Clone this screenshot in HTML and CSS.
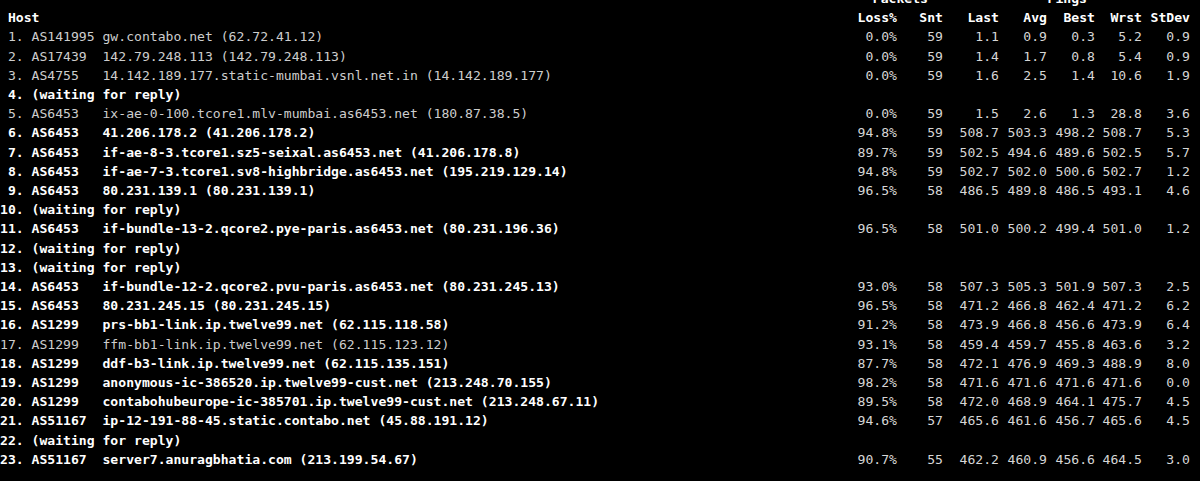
FILE: index.html
```html
<!DOCTYPE html>
<html>
<head>
<meta charset="utf-8">
<title>mtr</title>
<link rel="stylesheet" href="styles.css">
</head>
<body>
<div class="term">
  <div class="row head"><span class="host"></span><span class="grp packets">Packets</span><span class="grp pings">Pings</span></div>
  <div class="row head"><span class="host"> Host</span><span class="n">Loss%</span><span class="n">Snt</span><span class="n">Last</span><span class="n">Avg</span><span class="n">Best</span><span class="n">Wrst</span><span class="n">StDev</span></div>
  <div class="row"><span class="host"> 1. AS141995 gw.contabo.net (62.72.41.12)</span><span class="n">0.0%</span><span class="n">59</span><span class="n">1.1</span><span class="n">0.9</span><span class="n">0.3</span><span class="n">5.2</span><span class="n">0.9</span></div>
  <div class="row"><span class="host"> 2. AS17439  142.79.248.113 (142.79.248.113)</span><span class="n">0.0%</span><span class="n">59</span><span class="n">1.4</span><span class="n">1.7</span><span class="n">0.8</span><span class="n">5.4</span><span class="n">0.9</span></div>
  <div class="row"><span class="host"> 3. AS4755   14.142.189.177.static-mumbai.vsnl.net.in (14.142.189.177)</span><span class="n">0.0%</span><span class="n">59</span><span class="n">1.6</span><span class="n">2.5</span><span class="n">1.4</span><span class="n">10.6</span><span class="n">1.9</span></div>
  <div class="row"><span class="host b"> 4. (waiting for reply)</span></div>
  <div class="row"><span class="host"> 5. AS6453   ix-ae-0-100.tcore1.mlv-mumbai.as6453.net (180.87.38.5)</span><span class="n">0.0%</span><span class="n">59</span><span class="n">1.5</span><span class="n">2.6</span><span class="n">1.3</span><span class="n">28.8</span><span class="n">3.6</span></div>
  <div class="row"><span class="host b"> 6. AS6453   41.206.178.2 (41.206.178.2)</span><span class="n">94.8%</span><span class="n">59</span><span class="n">508.7</span><span class="n">503.3</span><span class="n">498.2</span><span class="n">508.7</span><span class="n">5.3</span></div>
  <div class="row"><span class="host b"> 7. AS6453   if-ae-8-3.tcore1.sz5-seixal.as6453.net (41.206.178.8)</span><span class="n">89.7%</span><span class="n">59</span><span class="n">502.5</span><span class="n">494.6</span><span class="n">489.6</span><span class="n">502.5</span><span class="n">5.7</span></div>
  <div class="row"><span class="host b"> 8. AS6453   if-ae-7-3.tcore1.sv8-highbridge.as6453.net (195.219.129.14)</span><span class="n">94.8%</span><span class="n">59</span><span class="n">502.7</span><span class="n">502.0</span><span class="n">500.6</span><span class="n">502.7</span><span class="n">1.2</span></div>
  <div class="row"><span class="host b"> 9. AS6453   80.231.139.1 (80.231.139.1)</span><span class="n">96.5%</span><span class="n">58</span><span class="n">486.5</span><span class="n">489.8</span><span class="n">486.5</span><span class="n">493.1</span><span class="n">4.6</span></div>
  <div class="row"><span class="host b">10. (waiting for reply)</span></div>
  <div class="row"><span class="host b">11. AS6453   if-bundle-13-2.qcore2.pye-paris.as6453.net (80.231.196.36)</span><span class="n">96.5%</span><span class="n">58</span><span class="n">501.0</span><span class="n">500.2</span><span class="n">499.4</span><span class="n">501.0</span><span class="n">1.2</span></div>
  <div class="row"><span class="host b">12. (waiting for reply)</span></div>
  <div class="row"><span class="host b">13. (waiting for reply)</span></div>
  <div class="row"><span class="host b">14. AS6453   if-bundle-12-2.qcore2.pvu-paris.as6453.net (80.231.245.13)</span><span class="n">93.0%</span><span class="n">58</span><span class="n">507.3</span><span class="n">505.3</span><span class="n">501.9</span><span class="n">507.3</span><span class="n">2.5</span></div>
  <div class="row"><span class="host b">15. AS6453   80.231.245.15 (80.231.245.15)</span><span class="n">96.5%</span><span class="n">58</span><span class="n">471.2</span><span class="n">466.8</span><span class="n">462.4</span><span class="n">471.2</span><span class="n">6.2</span></div>
  <div class="row"><span class="host b">16. AS1299   prs-bb1-link.ip.twelve99.net (62.115.118.58)</span><span class="n">91.2%</span><span class="n">58</span><span class="n">473.9</span><span class="n">466.8</span><span class="n">456.6</span><span class="n">473.9</span><span class="n">6.4</span></div>
  <div class="row"><span class="host">17. AS1299   ffm-bb1-link.ip.twelve99.net (62.115.123.12)</span><span class="n">93.1%</span><span class="n">58</span><span class="n">459.4</span><span class="n">459.7</span><span class="n">455.8</span><span class="n">463.6</span><span class="n">3.2</span></div>
  <div class="row"><span class="host b">18. AS1299   ddf-b3-link.ip.twelve99.net (62.115.135.151)</span><span class="n">87.7%</span><span class="n">58</span><span class="n">472.1</span><span class="n">476.9</span><span class="n">469.3</span><span class="n">488.9</span><span class="n">8.0</span></div>
  <div class="row"><span class="host b">19. AS1299   anonymous-ic-386520.ip.twelve99-cust.net (213.248.70.155)</span><span class="n">98.2%</span><span class="n">58</span><span class="n">471.6</span><span class="n">471.6</span><span class="n">471.6</span><span class="n">471.6</span><span class="n">0.0</span></div>
  <div class="row"><span class="host b">20. AS1299   contabohubeurope-ic-385701.ip.twelve99-cust.net (213.248.67.11)</span><span class="n">89.5%</span><span class="n">58</span><span class="n">472.0</span><span class="n">468.9</span><span class="n">464.1</span><span class="n">475.7</span><span class="n">4.5</span></div>
  <div class="row"><span class="host b">21. AS51167  ip-12-191-88-45.static.contabo.net (45.88.191.12)</span><span class="n">94.6%</span><span class="n">57</span><span class="n">465.6</span><span class="n">461.6</span><span class="n">456.7</span><span class="n">465.6</span><span class="n">4.5</span></div>
  <div class="row"><span class="host b">22. (waiting for reply)</span></div>
  <div class="row"><span class="host b">23. AS51167  server7.anuragbhatia.com (213.199.54.67)</span><span class="n">90.7%</span><span class="n">55</span><span class="n">462.2</span><span class="n">460.9</span><span class="n">456.6</span><span class="n">464.5</span><span class="n">3.0</span></div>
</div>
</body>
</html>
```

FILE: styles.css
```css
html, body {
  margin: 0;
  background: #000;
}

body {
  font-family: "DejaVu Sans Mono", "Liberation Mono", monospace;
  font-size: 13.1px;
  line-height: 19.2px;
  color: #d2d2d2;
  overflow: hidden;
}

.term {
  margin-top: -11px;
  padding: 0 10px 0 0;
}

.row {
  display: grid;
  grid-template-columns: 1fr 60px 46px 56px 48px 48px 47px 48px;
  white-space: pre;
}

.host {
  color: #cdcdcd;
}

.host.b {
  color: #fff;
  font-weight: bold;
}

.n {
  text-align: right;
  color: #d6d6d6;
}

.head {
  color: #fff;
  font-weight: bold;
}

.head .host,
.head .n {
  color: #fff;
}

.grp {
  text-align: right;
}

.packets {
  grid-column: 2 / 4;
  padding-right: 15px;
}

.pings {
  grid-column: 4 / 9;
  padding-right: 103px;
}
```
